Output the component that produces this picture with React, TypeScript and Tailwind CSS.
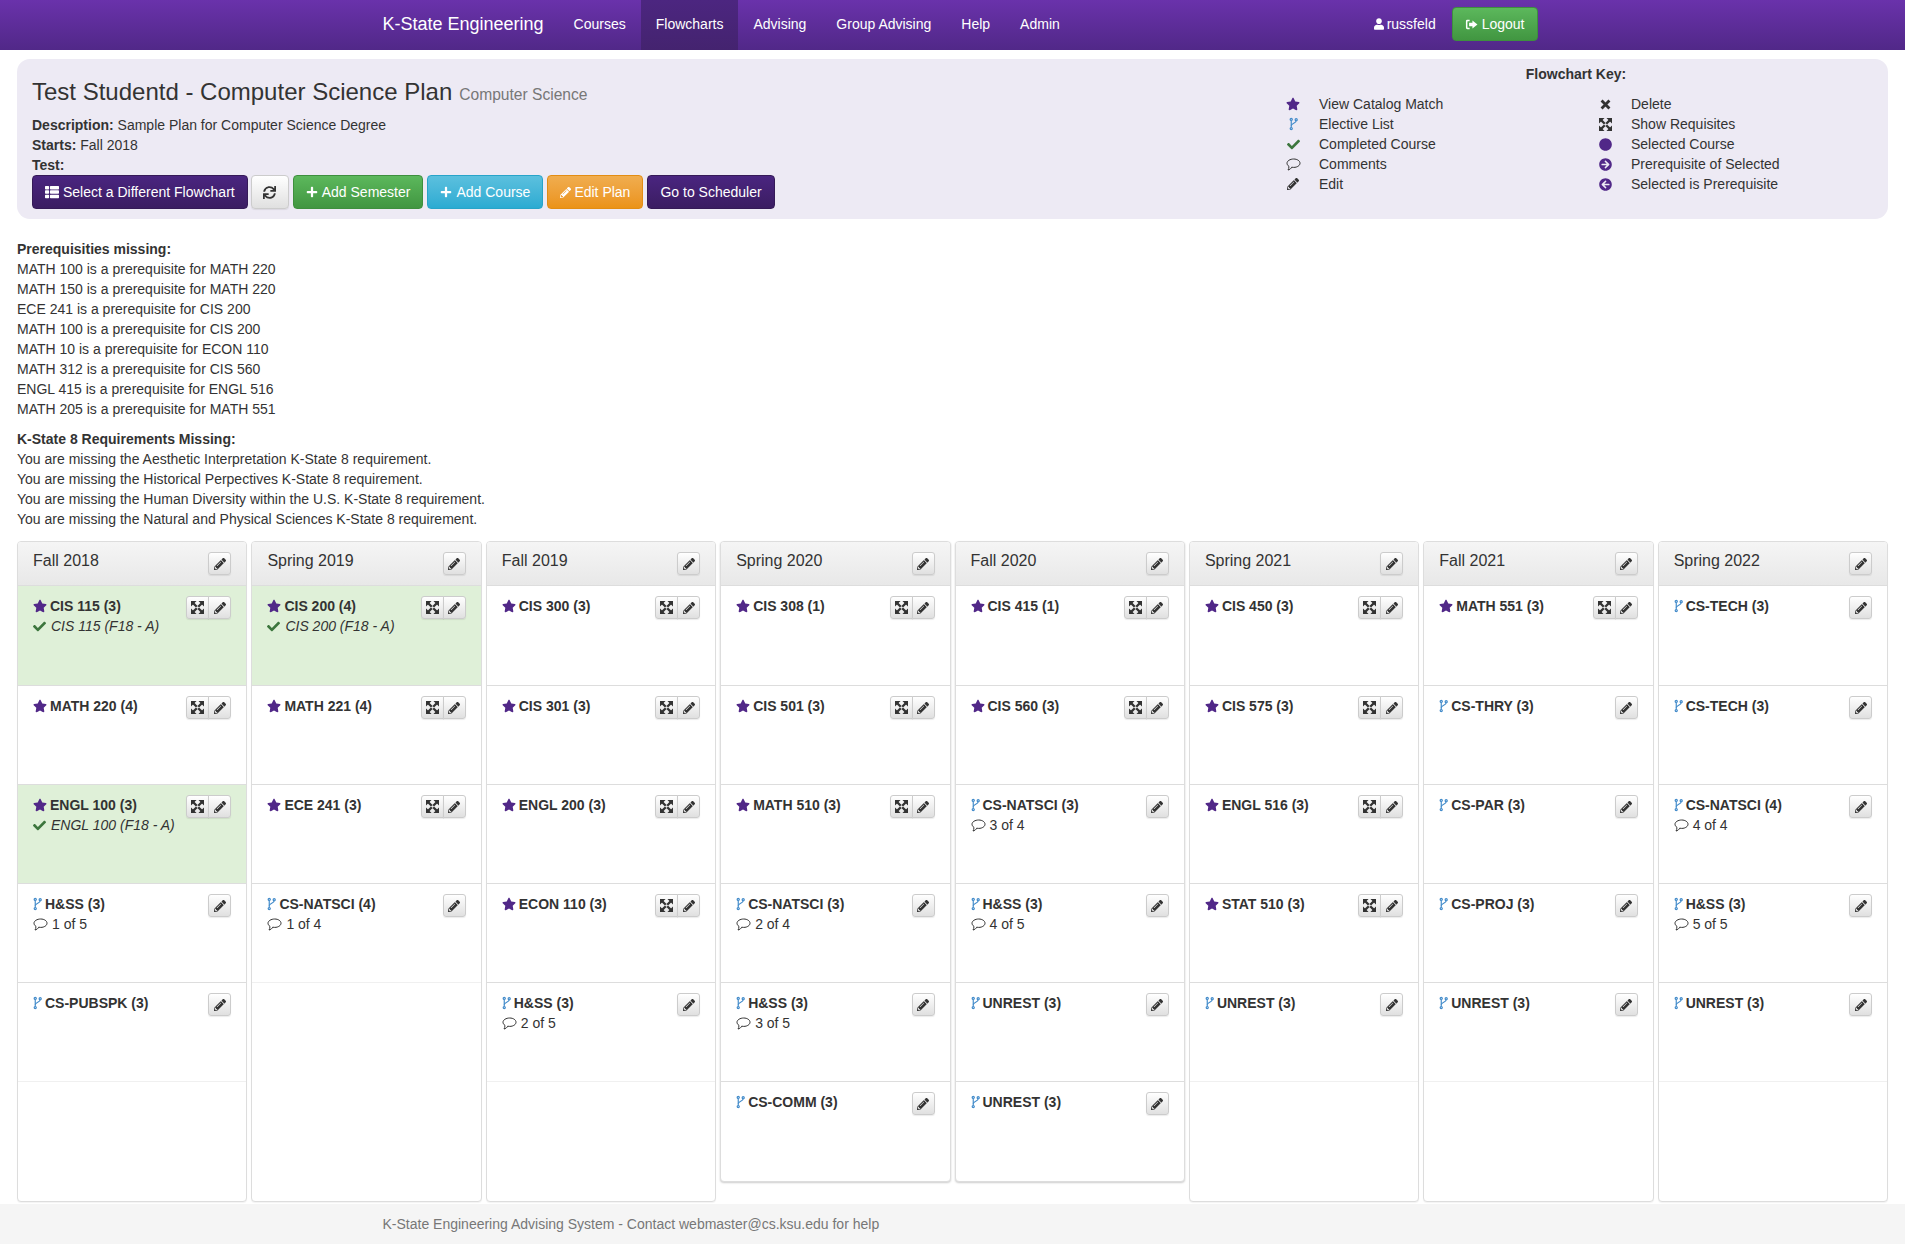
import React from "react";
import {
  FaStar,
  FaPencilAlt,
  FaCheck,
  FaCircle,
  FaArrowCircleRight,
  FaArrowCircleLeft,
  FaPlus,
  FaSync,
  FaThList,
  FaUser,
} from "react-icons/fa";

type Course = {
  name: string;
  kind: "star" | "fork";
  done?: string;
  note?: string;
};

type Semester = { title: string; courses: Course[] };

const star = (name: string, done?: string): Course => ({ name, kind: "star", done });
const fork = (name: string, note?: string): Course => ({ name, kind: "fork", note });

const semesters: Semester[] = [
  {
    title: "Fall 2018",
    courses: [
      star("CIS 115 (3)", "CIS 115 (F18 - A)"),
      star("MATH 220 (4)"),
      star("ENGL 100 (3)", "ENGL 100 (F18 - A)"),
      fork("H&SS (3)", "1 of 5"),
      fork("CS-PUBSPK (3)"),
    ],
  },
  {
    title: "Spring 2019",
    courses: [
      star("CIS 200 (4)", "CIS 200 (F18 - A)"),
      star("MATH 221 (4)"),
      star("ECE 241 (3)"),
      fork("CS-NATSCI (4)", "1 of 4"),
    ],
  },
  {
    title: "Fall 2019",
    courses: [
      star("CIS 300 (3)"),
      star("CIS 301 (3)"),
      star("ENGL 200 (3)"),
      star("ECON 110 (3)"),
      fork("H&SS (3)", "2 of 5"),
    ],
  },
  {
    title: "Spring 2020",
    courses: [
      star("CIS 308 (1)"),
      star("CIS 501 (3)"),
      star("MATH 510 (3)"),
      fork("CS-NATSCI (3)", "2 of 4"),
      fork("H&SS (3)", "3 of 5"),
      fork("CS-COMM (3)"),
    ],
  },
  {
    title: "Fall 2020",
    courses: [
      star("CIS 415 (1)"),
      star("CIS 560 (3)"),
      fork("CS-NATSCI (3)", "3 of 4"),
      fork("H&SS (3)", "4 of 5"),
      fork("UNREST (3)"),
      fork("UNREST (3)"),
    ],
  },
  {
    title: "Spring 2021",
    courses: [
      star("CIS 450 (3)"),
      star("CIS 575 (3)"),
      star("ENGL 516 (3)"),
      star("STAT 510 (3)"),
      fork("UNREST (3)"),
    ],
  },
  {
    title: "Fall 2021",
    courses: [
      star("MATH 551 (3)"),
      fork("CS-THRY (3)"),
      fork("CS-PAR (3)"),
      fork("CS-PROJ (3)"),
      fork("UNREST (3)"),
    ],
  },
  {
    title: "Spring 2022",
    courses: [
      fork("CS-TECH (3)"),
      fork("CS-TECH (3)"),
      fork("CS-NATSCI (4)", "4 of 4"),
      fork("H&SS (3)", "5 of 5"),
      fork("UNREST (3)"),
    ],
  },
];

const prereqs = [
  "MATH 100 is a prerequisite for MATH 220",
  "MATH 150 is a prerequisite for MATH 220",
  "ECE 241 is a prerequisite for CIS 200",
  "MATH 100 is a prerequisite for CIS 200",
  "MATH 10 is a prerequisite for ECON 110",
  "MATH 312 is a prerequisite for CIS 560",
  "ENGL 415 is a prerequisite for ENGL 516",
  "MATH 205 is a prerequisite for MATH 551",
];

const kstate = [
  "You are missing the Aesthetic Interpretation K-State 8 requirement.",
  "You are missing the Historical Perpectives K-State 8 requirement.",
  "You are missing the Human Diversity within the U.S. K-State 8 requirement.",
  "You are missing the Natural and Physical Sciences K-State 8 requirement.",
];

// elective list glyph, a thin forked stem
function ForkIcon({ className }: { className?: string }) {
  return (
    <svg viewBox="0 0 10 14" className={className} fill="none" stroke="currentColor" strokeWidth="1.3">
      <path d="M2.5 3v8" />
      <path d="M8 3.4c0 3-5.5 2.6-5.5 5.6" />
      <circle cx="2.5" cy="1.9" r="1.2" />
      <circle cx="8" cy="2.2" r="1.2" />
      <circle cx="2.5" cy="12.1" r="1.2" />
    </svg>
  );
}

// four arrows pointing at the corners
function FullscreenIcon({ className }: { className?: string }) {
  return (
    <svg viewBox="0 0 14 14" className={className} fill="currentColor" stroke="currentColor">
      <path strokeWidth="0" d="M0 0h6L0 6zM14 0v6L8 0zM0 14V8l6 6zM14 14H8l6-6z" />
      <path strokeWidth="2.4" d="M2 2l4.2 4.2M12 2L7.800 6.200M2 12l4.200-4.200M12 12L7.800 7.800" />
    </svg>
  );
}

function RemoveIcon({ className }: { className?: string }) {
  return (
    <svg viewBox="0 0 14 14" className={className} stroke="currentColor" strokeWidth="3.6">
      <path d="M2 2l10 10M12 2L2 12" />
    </svg>
  );
}

function LogoutIcon({ className }: { className?: string }) {
  return (
    <svg viewBox="0 0 14 14" className={className} fill="currentColor">
      <path d="M5 2H2.5A1.5 1.5 0 0 0 1 3.5v7A1.5 1.5 0 0 0 2.5 12H5v-1.6H3a.4.4 0 0 1-.4-.4V4a.4.4 0 0 1 .4-.4h2z" />
      <path d="M8 2.6 13.4 7 8 11.4V9H4.4V5H8z" />
    </svg>
  );
}

// speech bubble, tail at the lower left
function CommentIcon({ className }: { className?: string }) {
  return (
    <svg viewBox="0 0 15 13" className={className} fill="none" stroke="currentColor" strokeWidth="1">
      <path d="M7.7 1C11.3 1 14 2.9 14 5.2S11.3 9.4 7.7 9.4c-.7 0-1.4-.1-2-.2C5 10.6 3.6 11.8 2 12c.7-.9 1-2 .9-3.7C1.700 7.500 1 6.400 1 5.200 1 2.900 4.100 1 7.700 1z" />
    </svg>
  );
}

const btnDefault =
  "flex items-center justify-center border border-[#ccc] bg-gradient-to-b from-white to-[#e0e0e0] shadow-[0_1px_1px_rgba(0,0,0,0.08)] text-[#333]";

function EditButton() {
  return (
    <button className={`${btnDefault} h-[23px] w-[23px] rounded-[3px]`}>
      <FaPencilAlt className="h-[12px] w-[12px]" />
    </button>
  );
}

function CourseRow({ course, first, last, soft }: { course: Course; first: boolean; last: boolean; soft: boolean }) {
  return (
    <div
      className={`flex justify-between px-[15px] pt-[10px] ${first ? "h-[100px]" : "h-[99px]"} ${
        course.done ? "bg-[#dff0d8]" : ""
      } ${last ? (soft ? "border-b border-[#f0f0f0]" : "") : "border-b border-[#ddd]"}`}
    >
      <div className="leading-5">
        <div className="flex items-center font-bold">
          {course.kind === "star" ? (
            <FaStar className="mr-[3px] h-[14px] w-[14px] text-[#512888]" />
          ) : (
            <ForkIcon className="mr-[3px] h-[14px] w-[9px] text-[#428bca]" />
          )}
          {course.name}
        </div>
        {course.done && (
          <div className="flex items-center italic">
            <FaCheck className="mr-[5px] h-[13px] w-[13px] text-[#3c763d]" />
            {course.done}
          </div>
        )}
        {course.note && (
          <div className="flex items-center">
            <CommentIcon className="mr-[4px] h-[13px] w-[15px]" />
            {course.note}
          </div>
        )}
      </div>
      {course.kind === "star" ? (
        <div className="flex h-[23px] shrink-0">
          <button className={`${btnDefault} h-[23px] w-[23px] rounded-l-[3px]`}>
            <FullscreenIcon className="h-[13px] w-[13px]" />
          </button>
          <button className={`${btnDefault} -ml-px h-[23px] w-[23px] rounded-r-[3px]`}>
            <FaPencilAlt className="h-[12px] w-[12px]" />
          </button>
        </div>
      ) : (
        <EditButton />
      )}
    </div>
  );
}

function SemesterPanel({ semester }: { semester: Semester }) {
  const six = semester.courses.length === 6;
  return (
    <div
      className={`self-start overflow-hidden rounded-[4px] border border-[#ddd] bg-white ${
        six ? "h-[641px] shadow-[0_1px_2px_rgba(0,0,0,0.2)]" : "h-[661px] shadow-[0_1px_1px_rgba(0,0,0,0.05)]"
      }`}
    >
      <div className="flex h-[44px] items-start justify-between border-b border-[#ddd] bg-gradient-to-b from-[#f5f5f5] to-[#e8e8e8] px-[15px] pt-[10px]">
        <span className="text-base leading-[18px] text-[#333]">{semester.title}</span>
        <EditButton />
      </div>
      {semester.courses.map((c, i) => (
        <CourseRow key={i} course={c} first={i === 0} last={i === semester.courses.length - 1} soft={!six} />
      ))}
    </div>
  );
}

function KeyRow({ icon, label }: { icon: React.ReactNode; label: string }) {
  return (
    <div className="flex h-5 items-center">
      <div className="flex w-[55px] justify-center pl-[3px]">{icon}</div>
      <span>{label}</span>
    </div>
  );
}

const actionBtn = "flex h-[34px] items-center rounded-[4px] border px-3 text-white";

export default function App() {
  return (
    <div className="bg-white font-['Liberation_Sans',Arial,sans-serif] text-sm leading-5 text-[#333]">
      <nav className="h-[50px] bg-gradient-to-b from-[#6a32ab] to-[#512888]">
        <div className="mx-auto flex w-[1170px] items-center justify-between">
          <div className="flex items-center text-white">
            <a className="px-[15px] pb-[2px] text-lg leading-[48px]">K-State Engineering</a>
            {["Courses", "Flowcharts", "Advising", "Group Advising", "Help", "Admin"].map((n) => (
              <a
                key={n}
                className={`px-[15px] pb-[2px] leading-[48px] ${n === "Flowcharts" ? "bg-gradient-to-b from-[#4c2680] to-[#44236f]" : ""}`}
              >
                {n}
              </a>
            ))}
          </div>
          <div className="-mt-[2px] flex items-center text-white">
            <FaUser className="mr-[3px] h-[12px] w-[10px]" />
            <span>russfeld</span>
            <button className="ml-[16px] flex h-[34px] items-center rounded-[4px] border border-[#3e8f3e] bg-gradient-to-b from-[#5cb85c] to-[#419641] px-3 text-white">
              <LogoutIcon className="mr-[4px] h-[13px] w-[13px]" />
              Logout
            </button>
          </div>
        </div>
      </nav>

      <div className="px-[17px]">
        <div className="mt-[9px] flex h-[160px] justify-between rounded-[13px] bg-[#edeaf4] pl-[15px]">
          <div className="pt-[20px]">
            <h3 className="flex items-baseline text-2xl leading-[26px]">
              Test Studentd - Computer Science Plan
              <small className="ml-[7px] text-[15.6px] leading-none text-[#777]">Computer Science</small>
            </h3>
            <div className="mt-[10px]">
              <b>Description:</b> Sample Plan for Computer Science Degree
            </div>
            <div>
              <b>Starts:</b> Fall 2018
            </div>
            <div className="h-[20px]">
              <b>Test:</b>
            </div>
            <div className="flex gap-[4px]">
              <button className={`${actionBtn} border-[#351a57] bg-gradient-to-b from-[#4a2580] to-[#3b1d62]`}>
                <FaThList className="mr-[4px] h-[14px] w-[14px]" />
                Select a Different Flowchart
              </button>
              <button className={`${btnDefault} -ml-px h-[34px] w-[38px] rounded-[4px]`}>
                <FaSync className="h-[13px] w-[13px]" />
              </button>
              <button className={`${actionBtn} border-[#3e8f3e] bg-gradient-to-b from-[#5cb85c] to-[#419641]`}>
                <FaPlus className="mr-[4px] h-[12px] w-[12px]" />
                Add Semester
              </button>
              <button className={`${actionBtn} border-[#28a4c9] bg-gradient-to-b from-[#5bc0de] to-[#2aabd2]`}>
                <FaPlus className="mr-[4px] h-[12px] w-[12px]" />
                Add Course
              </button>
              <button className={`${actionBtn} border-[#e38d13] bg-gradient-to-b from-[#f0ad4e] to-[#eb9316]`}>
                <FaPencilAlt className="mr-[3px] h-[11px] w-[11px]" />
                Edit Plan
              </button>
              <button className={`${actionBtn} border-[#351a57] bg-gradient-to-b from-[#4a2580] to-[#3b1d62]`}>
                Go to Scheduler
              </button>
            </div>
          </div>
          <div className="w-[624px] pt-[5px]">
            <div className="text-center font-bold">Flowchart Key:</div>
            <div className="mt-[10px] grid grid-cols-2">
              <div>
                <KeyRow icon={<FaStar className="h-[14px] w-[14px] text-[#512888]" />} label="View Catalog Match" />
                <KeyRow icon={<ForkIcon className="h-[14px] w-[9px] text-[#428bca]" />} label="Elective List" />
                <KeyRow icon={<FaCheck className="h-[13px] w-[13px] text-[#3c763d]" />} label="Completed Course" />
                <KeyRow icon={<CommentIcon className="h-[13px] w-[15px]" />} label="Comments" />
                <KeyRow icon={<FaPencilAlt className="h-[12px] w-[12px]" />} label="Edit" />
              </div>
              <div>
                <KeyRow icon={<RemoveIcon className="h-[11px] w-[11px]" />} label="Delete" />
                <KeyRow icon={<FullscreenIcon className="h-[13px] w-[13px]" />} label="Show Requisites" />
                <KeyRow icon={<FaCircle className="h-[13px] w-[13px] text-[#512888]" />} label="Selected Course" />
                <KeyRow icon={<FaArrowCircleRight className="h-[13px] w-[13px] text-[#512888]" />} label="Prerequisite of Selected" />
                <KeyRow icon={<FaArrowCircleLeft className="h-[13px] w-[13px] text-[#512888]" />} label="Selected is Prerequisite" />
              </div>
            </div>
          </div>
        </div>

        <div className="mt-[20px]">
          <b>Prerequisities missing:</b>
          {prereqs.map((p, i) => (
            <div key={i}>{p}</div>
          ))}
        </div>
        <div className="mt-[10px]">
          <b>K-State 8 Requirements Missing:</b>
          {kstate.map((k, i) => (
            <div key={i}>{k}</div>
          ))}
        </div>

        <div className="mt-[12px] grid grid-cols-8 gap-[4px]">
          {semesters.map((s) => (
            <SemesterPanel key={s.title} semester={s} />
          ))}
        </div>
      </div>

      <footer className="mt-[2px] h-[40px] bg-[#f5f5f5]">
        <div className="mx-auto w-[1170px] px-[15px] leading-[40px] text-[#777]">
          K-State Engineering Advising System - Contact webmaster@cs.ksu.edu for help
        </div>
      </footer>
    </div>
  );
}
